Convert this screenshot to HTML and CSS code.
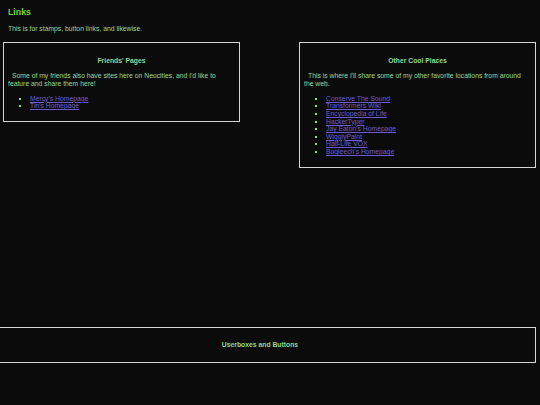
FILE: index.html
```html
<!DOCTYPE html>
<html>
<head>
<meta charset="utf-8">
<link rel="stylesheet" href="styles.css">
</head>
<body>
<div class="page">
  <header class="intro">
    <h1 class="page-title">Links</h1>
    <p class="lead">This is for stamps, button links, and likewise.</p>
  </header>
  <div class="columns">
    <section class="box">
      <h2 class="box-title">Friends' Pages</h2>
      <p class="box-text">Some of my friends also have sites here on Neocities, and I'd like to feature and share them here!</p>
      <ul class="link-list">
        <li><a href="#">Mercy's Homepage</a></li>
        <li><a href="#">Tin's Homepage</a></li>
      </ul>
    </section>
    <section class="box">
      <h2 class="box-title">Other Cool Places</h2>
      <p class="box-text">This is where I'll share some of my other favorite locations from around the web.</p>
      <ul class="link-list">
        <li><a href="#">Conserve The Sound</a></li>
        <li><a href="#">Transformers Wiki</a></li>
        <li><a href="#">Encyclopedia of Life</a></li>
        <li><a href="#">HackerTyper</a></li>
        <li><a href="#">Jay Eaton's Homepage</a></li>
        <li><a href="#">WigglyPaint</a></li>
        <li><a href="#">Half-Life VOX</a></li>
        <li><a href="#">Bogleech's Homepage</a></li>
      </ul>
    </section>
  </div>
  <section class="wide-box">
    <h2 class="box-title">Userboxes and Buttons</h2>
  </section>
</div>
</body>
</html>
```
FILE: styles.css
```css
html, body {
  margin: 0;
  padding: 0;
  background: #0b0b0b;
}
body {
  font-family: "Liberation Sans", Arial, sans-serif;
  font-size: 6.8px;
  line-height: 7.6px;
  color: #9ad79a;
  overflow: hidden;
  height: 405px;
}
.page {
  padding: 0 4px 0 3px;
}
.intro {
  padding: 7px 5px 0;
}
.page-title {
  margin: 0;
  font-size: 8.8px;
  line-height: 10px;
  font-weight: bold;
  color: #78d13c;
}
.lead {
  margin: 8px 0 0;
}
.columns {
  display: flex;
  justify-content: space-between;
  align-items: flex-start;
  margin-top: 9px;
}
.box {
  border: 1px solid #d4d4d4;
  padding: 0 4px 11px;
  box-sizing: border-box;
  width: 237px;
}
.box-title {
  margin: 14px 0 0;
  text-align: center;
  font-size: 6.8px;
  line-height: 7.6px;
  font-weight: bold;
  color: #93d993;
}
.box-text {
  margin: 8px 0 0;
  text-indent: 4px;
}
.link-list {
  margin: 7.5px 0 0;
  padding-left: 22px;
  list-style: square;
}
.link-list li::marker {
  color: #9ad79a;
}
.link-list a {
  color: #6c5cd0;
  text-decoration: underline;
}
.wide-box {
  margin: 159px 0 0 -19px;
  border: 1px solid #d4d4d4;
  height: 34px;
  display: flex;
  align-items: center;
  justify-content: center;
}
.wide-box .box-title {
  margin: 0;
}
```
